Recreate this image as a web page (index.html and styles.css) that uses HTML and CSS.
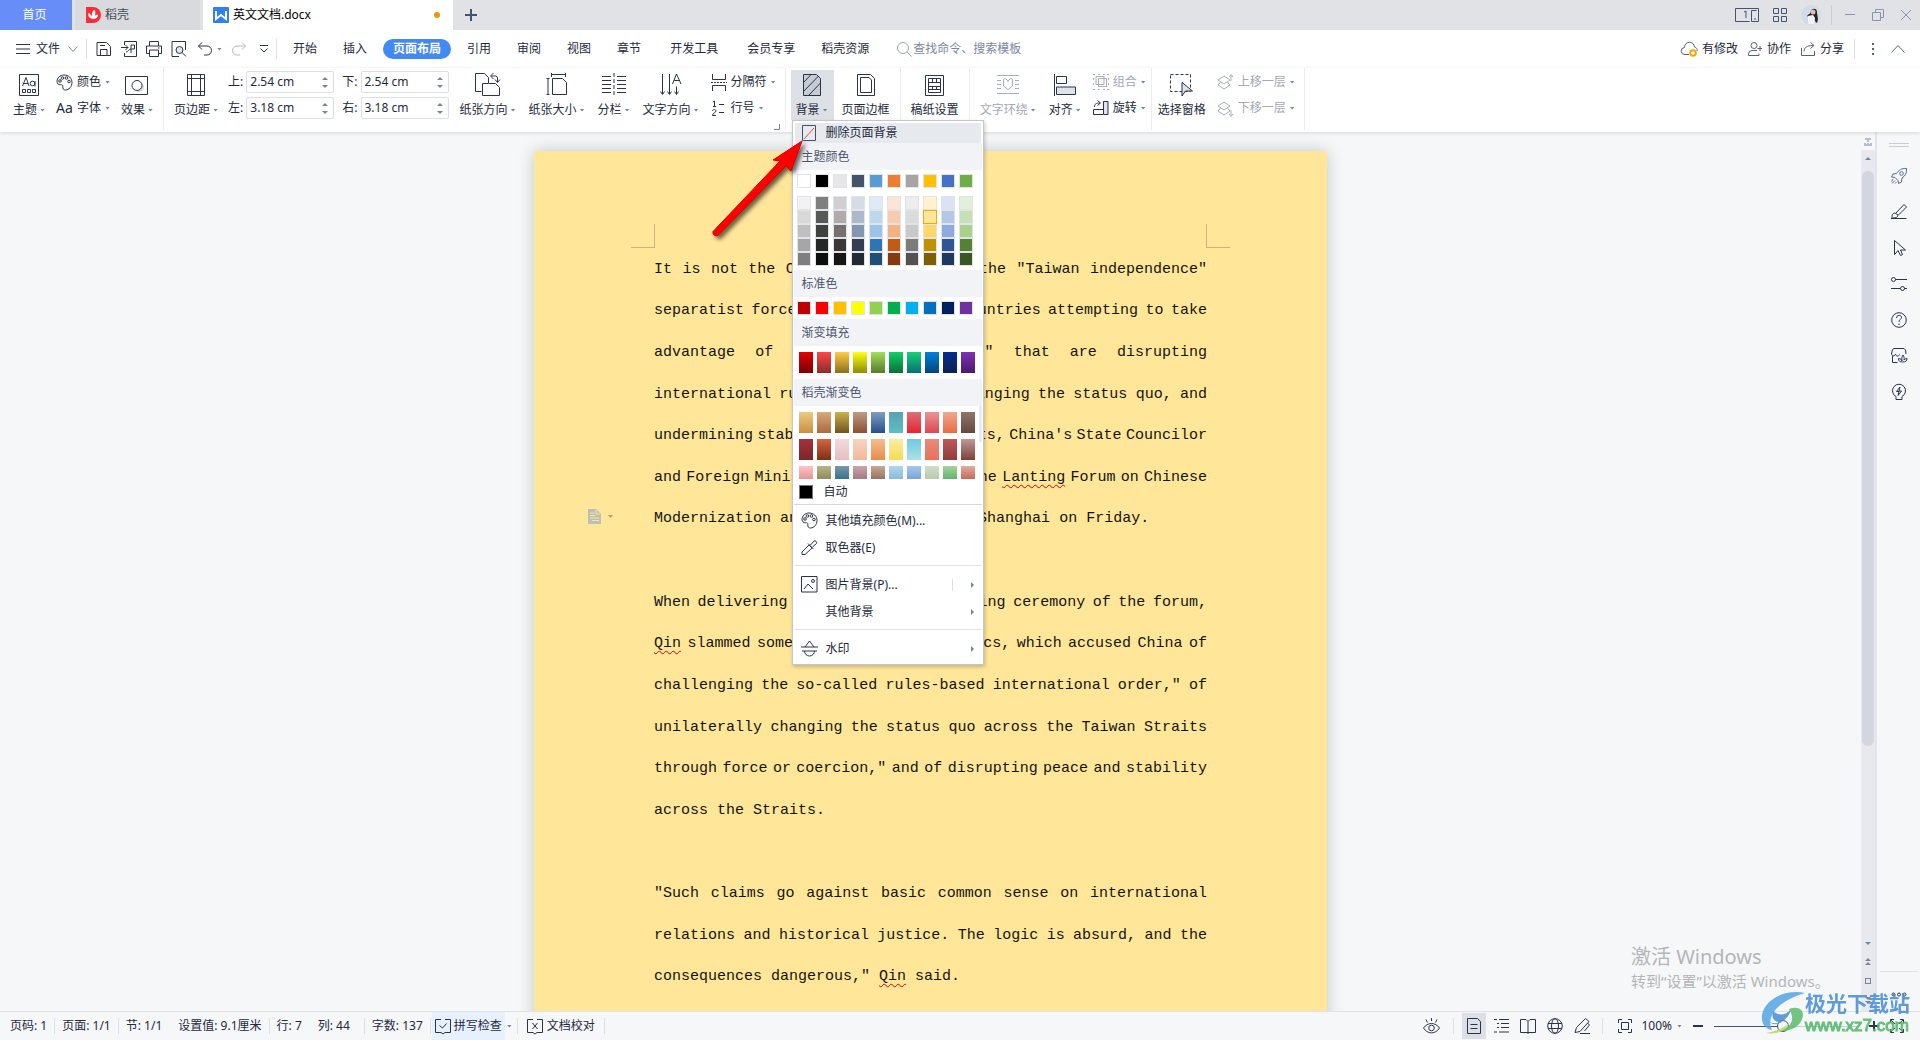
FILE: index.html
```html
<!DOCTYPE html>
<html lang="zh-CN">
<head>
<meta charset="utf-8">
<title>英文文档.docx</title>
<link rel="stylesheet" href="styles.css">
</head>
<body>
<svg class="defs" aria-hidden="true">
  <symbol id="palette" viewBox="0 0 17 17"><path d="M8 1C4 1 1 4 1 7.500c0 2 1.500 3.500 3.500 3.200 1.500-.2 2.500.3 2.300 2-.2 2 .7 3.300 2.700 3.300 3.500 0 6.500-3.500 6.500-7.500C16 4 12.500 1 8 1z"/><circle cx="4" cy="7" r="1.300"/><circle cx="6.500" cy="4" r="1.300"/><circle cx="10.500" cy="4" r="1.300"/><circle cx="13" cy="7.500" r="1.300"/></symbol>
  <symbol id="layers" viewBox="0 0 17 17"><path d="M1 6l6-4 6 4-6 4zM3.500 8L1 11l6 4 6-4-2.500-3"/></symbol>
</svg>

<header class="titlebar">
  <button class="tab home">首页</button>
  <button class="tab docer"><svg width="15" height="16" viewBox="0 0 15 16"><path class="red" d="M0 0h7a8 8 0 0 1 0 16H0z"/><path class="wfill" d="M7 12C2 11 2 8 2.500 6c2 1 3 2 3.500 4C5.500 7 6 4 8.500 2.500 10 5 9.500 8 8 10c.7-1.500 2-2.500 4-2.500 0 3-2 4.500-5 4.500z"/></svg>稻壳</button>
  <button class="tab doc"><svg width="16" height="16" viewBox="0 0 16 16"><rect class="blue" width="16" height="16" rx="1"/><path class="wline" d="M3 4v8l5-4 5 4V4"/></svg><span>英文文档.docx</span><i class="dot"></i></button>
  <button class="plus" aria-label="新建"><svg width="12" height="12" viewBox="0 0 12 12"><path class="thick" d="M6 0v12M0 6h12"/></svg></button>
  <div class="wintools">
    <button aria-label="窗口"><svg width="24" height="14" viewBox="0 0 24 14"><path d="M14.500 13.500H.5V.5h23v13h-7V2.500h5M9 4l2-1v7M19 11h2"/></svg></button>
    <button aria-label="应用"><svg width="14" height="14" viewBox="0 0 14 14"><path d="M.5.500h5v5h-5zM8.500.500h5v5h-5zM.5 8.500h5v5h-5zM8.500 8.500h5v5h-5z"/></svg></button>
    <button class="avatar" aria-label="账号"><svg width="20" height="20" viewBox="0 0 20 20"><circle cx="10" cy="10" r="10" fill="#cfdde4" stroke="none"/><path fill="#2b2227" stroke="none" d="M6 11c1-2 3-1 4-5 1-3 6-3 6 1 0 3 2 7 0 11-2-1-3-4-3-6-2 1-4 1-7-1z"/><circle cx="12" cy="7" r="2.500" fill="#e9b9ab" stroke="none"/><path fill="#eef3f6" stroke="none" d="M7 11l5-1 2 3-1 6H7z"/></svg></button>
    <i class="vline"></i>
    <button class="pale" aria-label="最小化"><svg width="12" height="12" viewBox="0 0 12 12"><path d="M1 5.500h10"/></svg></button>
    <button class="pale" aria-label="还原"><svg width="12" height="12" viewBox="0 0 12 12"><path d="M.5 3.500h8v8h-8zM3.500 3.500v-3h8v8h-3"/></svg></button>
    <button class="pale" aria-label="关闭"><svg width="12" height="12" viewBox="0 0 12 12"><path d="M1 1l10 10M11 1L1 11"/></svg></button>
  </div>
</header>

<nav class="menubar">
  <button class="file"><svg width="14" height="10" viewBox="0 0 14 10"><path d="M0 .5h14M0 5h14M0 9.500h14"/></svg>文件<svg class="soft" width="10" height="6" viewBox="0 0 10 6"><path d="M.5.500L5 5.500 9.500.5"/></svg></button>
  <i class="vline"></i>
  <div class="quick">
    <button aria-label="保存"><svg width="16" height="16" viewBox="0 0 16 16"><path d="M1 1.500h9.500l4 4v9H1zM4.500 14.500V8.500H11v6M4 4.500h5"/></svg></button>
    <button aria-label="输出为PDF"><svg width="16" height="16" viewBox="0 0 16 16"><path d="M3.500 4V.5h12v15h-12V12M0 6.500h7M4.500 4L7 6.500 4.500 9M10 12V4h3.500v4H10c-2 0-3 3-5 3"/></svg></button>
    <button aria-label="打印"><svg width="16" height="16" viewBox="0 0 16 16"><path d="M3.500 5V.5h9V5M3.500 12.500h-3V5h15v7.500h-3M3.500 9h9v6.500h-9zM12 7h1.500"/></svg></button>
    <button aria-label="打印预览"><svg width="16" height="16" viewBox="0 0 16 16"><path d="M8 15.500H1V.5h13.500V9"/><circle class="tint" cx="8.500" cy="9" r="3.500"/><path d="M11 11.500l4 4"/></svg></button>
    <button class="undo" aria-label="撤销"><svg width="14" height="14" viewBox="0 0 14 14"><path d="M4 .5L.5 4 4 7.500M.5 4H9a4.500 4.500 0 0 1 0 9H6"/></svg><i class="caret"></i></button>
    <button class="faint" aria-label="恢复"><svg width="14" height="14" viewBox="0 0 14 14"><path d="M10 .5L13.500 4 10 7.500M13.500 4H5a4.500 4.500 0 0 0 0 9h3"/></svg></button>
    <button aria-label="更多"><svg width="8" height="8" viewBox="0 0 8 8"><path d="M0 .5h8M.5 3.500L4 7l3.500-3.500"/></svg></button>
  </div>
  <i class="vline"></i>
  <div class="tabs">
    <button>开始</button><button>插入</button><button class="active">页面布局</button><button>引用</button><button>审阅</button><button>视图</button><button>章节</button><button class="wide">开发工具</button><button>会员专享</button><button>稻壳资源</button>
  </div>
  <label class="search"><svg width="15" height="15" viewBox="0 0 15 15"><circle cx="6" cy="6" r="5.500"/><path d="M10 10l4.500 4.500"/></svg><input type="text" placeholder="查找命令、搜索模板"></label>
  <div class="share">
    <button><svg width="17" height="15" viewBox="0 0 17 15"><path d="M8 12.500H4a3.500 3.500 0 0 1-.5-7 5 5 0 0 1 10-.5c2 .5 3 2 2.500 4"/><circle class="amber" cx="12" cy="11" r="2.800"/></svg>有修改</button>
    <button><svg width="15" height="14" viewBox="0 0 15 14"><circle cx="6" cy="3.500" r="3"/><path d="M9 8.500H4a3.500 3.500 0 0 0-3.500 3.500v1.500h10.500v-2M9.500 6.500H14M12 4v5"/></svg>协作</button>
    <button><svg width="15" height="14" viewBox="0 0 15 14"><path d="M.5 6v7.500h13V9M3 9.500c0-4 3-6 9-6M9.500.5l3.500 3-3.500 3"/></svg>分享</button>
    <i class="vline"></i>
    <button class="soft" aria-label="更多"><svg width="4" height="12" viewBox="0 0 4 12"><path class="thick" d="M1 1h2M1 6h2M1 11h2"/></svg></button>
    <button class="soft" aria-label="收起"><svg width="14" height="8" viewBox="0 0 14 8"><path d="M.5 7.500l6.500-7 6.500 7"/></svg></button>
  </div>
</nav>

<section class="ribbon">
  <div class="group close">
    <button class="tool"><svg width="20" height="22" viewBox="0 0 20 22"><path d="M.5.500h19v21H.5zM3.500 15.500h3v3h-3zM8.500 15.500h3v3h-3zM13.500 15.500h3v3h-3z"/><path d="M3.500 12L7 3.500l3 8.500M4.500 9.500h4.500"/><circle cx="13.500" cy="9.500" r="2.300"/><path d="M16 7v5.500"/></svg><span>主题<i class="caret"></i></span></button>
    <div class="stack">
      <button class="mini"><svg width="17" height="17"><use href="#palette"/></svg>颜色<i class="caret"></i></button>
      <button class="mini"><span class="aa">Aa</span>字体<i class="caret"></i></button>
    </div>
    <button class="tool"><svg width="24" height="22" viewBox="0 0 24 22"><circle class="ghost" cx="14" cy="13" r="5"/><path d="M.5 2.500h22v18H.5z"/><circle class="paper" cx="12" cy="11.500" r="5"/></svg><span>效果<i class="caret"></i></span></button>
  </div>
  <i class="rule"></i>
  <div class="group">
    <button class="tool"><svg width="18" height="22" viewBox="0 0 18 22"><path d="M.5.500h17v21H.5zM4.500 0v22M13.500 0v22M0 4.500h18M0 17.500h18"/></svg><span>页边距<i class="caret"></i></span></button>
    <div class="margins">
      <label>上:<span class="spin"><input type="text" value="2.54 cm"><i class="up"></i><i class="down"></i></span></label>
      <label>下:<span class="spin"><input type="text" value="2.54 cm"><i class="up"></i><i class="down"></i></span></label>
      <label>左:<span class="spin"><input type="text" value="3.18 cm"><i class="up"></i><i class="down"></i></span></label>
      <label>右:<span class="spin"><input type="text" value="3.18 cm"><i class="up"></i><i class="down"></i></span></label>
    </div>
    <button class="tool"><svg width="25" height="24" viewBox="0 0 25 24"><path d="M6.500 18.500h-6V.5h9l4 4v5.500M13.500 10.500h7l4 4v8H7.500v-12h6M16.500 3h4a2 2 0 0 1 2 2v4M18.500 0l-3 3 3 3M20 6.500l2.500 3 2.500-3"/></svg><span>纸张方向<i class="caret"></i></span></button>
    <button class="tool"><svg width="22" height="24" viewBox="0 0 22 24"><path d="M5.500 1.500h14M5.500 0v4M19.500 0v4M2 5.500v16M.5 5.500h3M.5 21.500h3M6.500 5.500h10l4 4v12h-14z"/></svg><span>纸张大小<i class="caret"></i></span></button>
    <button class="tool"><svg width="24" height="24" viewBox="0 0 24 24"><path d="M0 3.500h9M0 7.500h9M0 11.500h9M0 15.500h9M0 19.500h9M15 3.500h9M15 7.500h9M15 11.500h9M15 15.500h9M15 19.500h9"/><path class="dash" d="M12 0v24"/></svg><span>分栏<i class="caret"></i></span></button>
    <button class="tool"><svg width="22" height="24" viewBox="0 0 22 24"><path d="M2.500 1v20M.5 18.500l2 3 2-3M9.500 1v20M7.500 18.500l2 3 2-3M12.500 11l4-10 4.500 10M14 7.500h5.500M16.500 13.500v8M14.500 18.500l2 3 2-3"/></svg><span>文字方向<i class="caret"></i></span></button>
    <div class="stack">
      <button class="mini"><svg width="16" height="17" viewBox="0 0 16 17"><path d="M1.500 0v5.500h13V0M1.500 17v-5.500h13V17"/><path class="dots" d="M0 8.500h16"/></svg>分隔符<i class="caret"></i></button>
      <button class="mini"><svg width="16" height="17" viewBox="0 0 16 17"><path d="M2 2l1.500-1v5.500M2 6.500h3M1.500 11c0-2 3.500-2 3.500 0 0 1.500-3.500 2-3.500 4.500H5M8 4.500h5M8 12.500h5"/></svg>行号<i class="caret"></i></button>
    </div>
    <svg class="launcher" width="6" height="6" viewBox="0 0 6 6"><path d="M5.500 0v5.500H0"/></svg>
  </div>
  <i class="rule"></i>
  <div class="group">
    <div class="dropdown">
      <button class="tool pressed"><svg width="18" height="22" viewBox="0 0 18 22"><path class="hatch" d="M.5.500h13l4 4v17H.5z"/><path d="M1 8l7-7.500M1 17L15.500 2M5.500 21.500l12-12.500"/></svg><span>背景<i class="caret"></i></span></button>
      <div class="menu">
        <button class="remove"><svg width="14" height="16" viewBox="0 0 14 16"><path class="thick2" d="M.5.500h13v15H.5z"/><path class="redline" d="M2 14L12 3"/></svg>删除页面背景</button>
        <h3>主题颜色</h3>
        <div class="swatches theme" data-set="theme"></div>
        <div class="swatches shades" data-set="shades"></div>
        <h3>标准色</h3>
        <div class="swatches std" data-set="standard"></div>
        <h3>渐变填充</h3>
        <div class="gradients" data-set="gradient"></div>
        <h3 class="docer-head">稻壳渐变色</h3>
        <div class="gradients docer-set" data-set="docer"></div>
        <button class="auto"><i class="black"></i>自动</button>
        <button class="item first"><svg width="17" height="17"><use href="#palette"/></svg>其他填充颜色(M)...</button>
        <button class="item"><svg width="17" height="17" viewBox="0 0 17 17"><path d="M8 6l3 3-7 6.500H1V13zM7 4.500l5.500 5.500M9.500 6L13 2c1-1 3.500 1 2.500 2.500L11.500 8"/></svg>取色器(E)</button>
        <hr>
        <button class="item"><svg width="17" height="17" viewBox="0 0 17 17"><path d="M.5.500h15.500v15.500H.5zM3 13l4-5 5 5"/><circle cx="12" cy="5" r="1.500"/></svg>图片背景(P)...<i class="split"></i><i class="more"></i></button>
        <button class="item"><svg width="17" height="17"></svg>其他背景<i class="more"></i></button>
        <hr>
        <button class="item"><svg width="17" height="17" viewBox="0 0 17 17"><path d="M8.500 1L4 7M8.500 1L13 7M0 7h17M1 11h15M3.500 11a5 5 0 0 0 10 0"/></svg>水印<i class="more"></i></button>
      </div>
      <svg class="pointer" width="100" height="110" viewBox="0 0 100 110"><path d="M4 97.500L71 27l-7-1L93 7 82 37l-5-5L9 101.500a3.500 3.500 0 0 1-5-4z"/></svg>
    </div>
    <button class="tool"><svg width="18" height="22" viewBox="0 0 18 22"><path d="M.5.500h13l4 4v17H.5zM3.500 3.500h8.500l2.500 2.500v12.500h-11z"/></svg><span>页面边框</span></button>
  </div>
  <i class="rule"></i>
  <div class="group">
    <button class="tool"><svg width="19" height="22" viewBox="0 0 19 22"><path d="M.5 1.500h18v20H.5zM3.500 4.500h12v14h-12zM3.500 8.500h12M3.500 12.500h12M3.500 15.500h12M7.500 4.500v4M11.500 4.500v4M7.500 12.500v3M11.500 12.500v3"/></svg><span>稿纸设置</span></button>
  </div>
  <i class="rule"></i>
  <div class="group">
    <button class="tool off"><svg width="22" height="20" viewBox="0 0 22 20"><path d="M0 .5h22M0 5.500h4M18 5.500h4M0 9.500h4M18 9.500h4M0 13.500h4M18 13.500h4M0 18.500h22M6.500 5c0-2 3-2 4.500 1.500 1.500-3.500 4.500-3.500 4.500-1.500v6L11 14.500 6.500 11z"/></svg><span>文字环绕<i class="caret"></i></span></button>
    <button class="tool"><svg width="22" height="22" viewBox="0 0 22 22"><path d="M.5 0v22M2.500 2.500h10v7h-10z"/><path class="tint" d="M2.500 13h19v7.500h-19z"/></svg><span>对齐<i class="caret"></i></span></button>
    <div class="stack">
      <button class="mini off"><svg width="16" height="16" viewBox="0 0 16 16"><path d="M5.500 4.500h8v8h-8zM3 2.500h8v8H3zM0 .5h2M14 .5h2M0 15.500h2M14 15.500h2M.5 4v2M.5 9v2M15.500 4v2M15.500 9v2M5 15.500h2M10 15.500h2M5 .5h2M10 .5h2"/></svg>组合<i class="caret"></i></button>
      <button class="mini"><svg width="16" height="16" viewBox="0 0 16 16"><path class="tint" d="M10.500 1.500h4.500v13h-4.500z"/><path d="M10 9.500H.5v5H10M1.500 7c0-3 1.500-4 5.500-4M4.500.5L7.500 3 4.500 5.500"/></svg>旋转<i class="caret"></i></button>
    </div>
  </div>
  <i class="rule tight"></i>
  <div class="group close">
    <button class="tool"><svg width="24" height="23" viewBox="0 0 24 23"><path class="dash2" d="M.5.500h20v17H.5z"/><path class="tint" d="M12 8.500v13.500l3.500-5h7z"/></svg><span>选择窗格</span></button>
    <div class="stack">
      <button class="mini off"><svg width="17" height="17" viewBox="0 0 17 17"><use href="#layers"/><path d="M14 7V1M12 3l2-2.500L16 3"/></svg>上移一层<i class="caret"></i></button>
      <button class="mini off"><svg width="17" height="17" viewBox="0 0 17 17"><use href="#layers"/><path d="M14 10v6M12 14l2 2.500 2-2.500"/></svg>下移一层<i class="caret"></i></button>
    </div>
  </div>
  <i class="rule"></i>
</section>

<main class="workspace">
  <div class="canvas">
    <article class="page">
      <i class="corner left"></i><i class="corner right"></i>
      <span class="badge"><svg width="13" height="15" viewBox="0 0 13 15"><path class="gfill" d="M0 0h8l5 5v10H0z"/><path class="wline2" d="M2 4h4M2 6.500h5M2 9h9M4 11.500h7M8 1v4h4"/></svg><i class="caret"></i></span>
      <div class="text">
        <p>
          <span class="line">It is not the Chinese mainland but the "Taiwan independence"</span>
          <span class="line">separatist forces and a handful of countries attempting to take</span>
          <span class="line">advantage of "Taiwan independence" that are disrupting</span>
          <span class="line">international rules, unilaterally changing the status quo, and</span>
          <span class="line">undermining stability across the Straits, China's State Councilor</span>
          <span class="line">and Foreign Minister Qin Gang said at the Lanting Forum on Chinese</span>
          <span class="line end">Modernization and the World held in Shanghai on Friday.</span>
        </p>
        <p class="blank"></p>
        <p>
          <span class="line">When delivering a keynote at the opening ceremony of the forum,</span>
          <span class="line">Qin slammed some recent absurd rhetorics, which accused China of</span>
          <span class="line">challenging the so-called rules-based international order," of</span>
          <span class="line">unilaterally changing the status quo across the Taiwan Straits</span>
          <span class="line">through force or coercion," and of disrupting peace and stability</span>
          <span class="line end">across the Straits.</span>
        </p>
        <p class="blank"></p>
        <p>
          <span class="line">"Such claims go against basic common sense on international</span>
          <span class="line">relations and historical justice. The logic is absurd, and the</span>
          <span class="line end">consequences dangerous," Qin said.</span>
        </p>
      </div>
    </article>
    <div class="activate"><strong>激活 Windows</strong><span>转到“设置”以激活 Windows。</span></div>
  </div>
  <div class="scroll">
    <svg class="ruler" width="8" height="8" viewBox="0 0 8 8"><path d="M1 0h6v2H5v2H3V2H1zM0 5h2v1h1V5h2v1h1V5h2v3H0z"/></svg>
    <div class="track">
      <i class="up"></i><div class="thumb"></div>
      <div class="jump"><i class="down"></i><span class="pair"><i class="up"></i><i class="up"></i></span><i class="box"></i><span class="pair"><i class="down"></i><i class="down"></i></span></div>
    </div>
  </div>
  <aside class="side">
    <i class="grip"></i>
    <button aria-label="快捷"><svg class="steel" width="16" height="16" viewBox="0 0 16 16"><path d="M15.500.5c-5-.5-8 2-10 5L2 6 .5 9l3.500.5 3 3 .5 3 3-1.500.5-4c3-2 5-5 4.500-9.500zM2 11l-1.500 2.500M4 12.500l-3 3M5.500 14L4 15.500"/><circle cx="10.500" cy="5.500" r="1.800"/></svg></button>
    <button aria-label="样式"><svg width="16" height="16" viewBox="0 0 16 16"><path d="M0 14.500h15.500M1 14c0-3 .5-5 3-5l3 2c0 2-2 3-5 3M5 9l8-8.500L15.500 3l-8 8"/></svg></button>
    <button aria-label="选择"><svg width="16" height="16" viewBox="0 0 16 16"><path d="M3.500.5v14l3.500-4 2.500 5 2-1-2-4.500h5z"/></svg></button>
    <button aria-label="设置"><svg width="16" height="16" viewBox="0 0 16 16"><circle cx="2.500" cy="3.500" r="2"/><path d="M4.500 3.500H16M0 12.500h9.500M13.500 12.500H16"/><circle cx="11.500" cy="12.500" r="2"/></svg></button>
    <button aria-label="帮助"><svg width="16" height="16" viewBox="0 0 16 16"><circle cx="8" cy="8" r="7.300"/><path d="M5.500 6c0-3.500 5-3.500 5-.5 0 2-2.500 2-2.500 4.500M8 11.500V13"/></svg></button>
    <button aria-label="素材"><svg width="16" height="16" viewBox="0 0 16 16"><path d="M6.500 14.500H1.500V8M.5 6l1-4.500L3 .5h10l1.500 1.500.5 4M.5 5.500c0 3 3.500 3 4 .5.500 2.500 3 3 4 .5M11.500 14c-3 0-4-1-4-3.500 2 0 3 1 3.500 2.500-.5-3 0-4.500 1-6 1 1.500 1.500 3 1 5 1-1 1.500-1.500 3-1.500 0 2.500-1.500 3.500-4.500 3.500z"/></svg></button>
    <button aria-label="灵感"><svg width="16" height="16" viewBox="0 0 16 16"><path d="M5 12.500a6.500 6.500 0 1 1 6 0v3H5zM9 3L5.500 7.500H8L7 11.500 10.500 7H8z"/></svg></button>
    <hr>
    <button class="dots3" aria-label="更多"><svg width="16" height="5" viewBox="0 0 16 5"><circle cx="2.500" cy="2.500" r="1.500"/><circle cx="8" cy="2.500" r="1.500"/><circle cx="13.500" cy="2.500" r="1.500"/></svg></button>
  </aside>
</main>

<footer class="status">
  <span>页码: 1</span><i class="vline"></i>
  <span>页面: 1/1</span><i class="vline"></i>
  <span class="pad">节: 1/1</span><span>设置值: 9.1厘米</span><i class="vline"></i>
  <span class="pad">行: 7</span><span class="pad">列: 44</span><i class="vline"></i>
  <span>字数: 137</span><i class="vline"></i>
  <button class="spell"><svg width="16" height="16" viewBox="0 0 16 16"><path d="M6 1.500H.5v13H6l2 1.500 2-1.500h5.500v-13H10M4.500 7.500L7.500 10l4-4.500"/></svg>拼写检查</button><i class="caret"></i><i class="vline"></i>
  <button class="proof"><svg width="16" height="16" viewBox="0 0 16 16"><path d="M6 1.500H.5v13H6l2 1.500 2-1.500h5.500v-13H10M5.500 5l5 6M10.500 5l-5 6"/></svg>文档校对</button><i class="vline"></i>
  <div class="views">
    <button class="eye" aria-label="护眼"><svg width="17" height="16" viewBox="0 0 17 16"><path d="M.5 10c4-6 12-6 16 0-4 6.500-12 6.500-16 0zM8.500 0v3M3 1.500l1.500 3M14 1.500l-1.500 3"/><circle cx="8.500" cy="10" r="2.800"/></svg></button>
    <i class="vline"></i>
    <button class="on" aria-label="页面视图"><svg width="14" height="16" viewBox="0 0 14 16"><path d="M.5.500h10l3 3v12H.5zM3.500 6.500h7M3.500 10.500h7"/></svg></button>
    <button aria-label="大纲"><svg width="15" height="14" viewBox="0 0 15 14"><path d="M0 .5h3M5 .5h10M3 4.500h2M7 4.500h8M3 8.500h2M7 8.500h8M0 13h3M5 13h10"/></svg></button>
    <button aria-label="阅读"><svg width="16" height="16" viewBox="0 0 16 16"><path d="M8 14.500H.5v-13h5.500l2 2 2-2h5.500v13zM8 3.500V16"/></svg></button>
    <button aria-label="网页"><svg width="16" height="16" viewBox="0 0 16 16"><circle cx="8" cy="8" r="7.300"/><ellipse cx="8" cy="8" rx="3.500" ry="7.300"/><path d="M1 5.500h14M1 10.500h14"/></svg></button>
    <button aria-label="写作"><svg width="17" height="16" viewBox="0 0 17 16"><path d="M6 15.500h10M1 14.500l1.500-5L11.500.5l3.500 3-9 10zM13.500 5l2 2-5 6"/></svg></button>
    <i class="vline"></i>
    <button class="fit" aria-label="适合页面"><svg width="14" height="14" viewBox="0 0 14 14"><path d="M.5 4V.5H4M10 .5h3.500V4M13.500 10v3.500H10M4 13.500H.5V10M3.500 3.500h7v7h-7z"/></svg></button>
    <button class="pct">100%<i class="caret"></i></button>
    <button aria-label="缩小"><svg width="10" height="12" viewBox="0 0 10 12"><path class="thick" d="M0 6h10"/></svg></button>
    <input class="zoom" type="range" min="0" max="100" value="48" aria-label="缩放">
    <button aria-label="放大"><svg width="10" height="12" viewBox="0 0 10 12"><path class="thick" d="M0 6h10M5 1v10"/></svg></button>
    <button aria-label="全屏"><svg width="14" height="14" viewBox="0 0 14 14"><path d="M.5 4V.5H4M10 .5h3.500V4M13.500 10v3.500H10M4 13.500H.5V10M1 1l4 4M13 1L9 5M13 13L9 9M1 13l4-4"/></svg></button>
  </div>
</footer>

<div class="brand">
  <svg width="44" height="44" viewBox="0 0 44 44"><path fill="#59a7e6" d="M44 2C24-2 4 8 1 24c-1 8 3 14 10 15C5 27 14 11 44 2z"/><path fill="#4f8fd8" d="M7 30c6 5 20 2 23-12-6 8-14 6-18 2-2 8 2 12 9 11-5 3-10 3-14-1z"/><path fill="#5fbf70" d="M28 18c8-3 14 0 14 6-1 12-14 18-28 16 14-2 22-9 14-22z"/><path fill="#b9d66b" d="M5 42c10-2 18-5 24-10-4 8-14 12-24 10z"/></svg>
  <div><strong>极光下载站</strong><span>www.xz7.com</span></div>
</div>
<script src="app.js"></script>
</body>
</html>
```
FILE: styles.css
```css
* { box-sizing: border-box; }
body {
  margin: 0;
  height: 100vh;
  display: flex;
  flex-direction: column;
  overflow: hidden;
  position: relative;
  background: #f6f7f9;
  color: #232a3d;
  font: 12px/16px "Noto Sans", "Noto Sans CJK SC", sans-serif;
}
button, input { font: inherit; color: inherit; border: 0; padding: 0; margin: 0; background: none; }
button { display: flex; align-items: center; white-space: nowrap; }
i { display: block; flex: none; }
svg { display: block; flex: none; fill: none; stroke: #2a3348; stroke-width: 1; overflow: visible; }
.defs { position: absolute; width: 0; height: 0; }
.thick { stroke-width: 2; }
.tint { fill: #dfe3ea; }
.dash { stroke-dasharray: 4 2; }
.dash2 { stroke-dasharray: 3 2; }
.dots { stroke-dasharray: 2 1; }
.vline { width: 1px; height: 20px; background: #dcdfe6; }
.caret { width: 5px; height: 3px; background: #78839c; clip-path: polygon(0 0, 100% 0, 50% 100%); }
.up, .down { width: 6px; height: 3px; border: 3px solid transparent; }
.up { border-top: 0; border-bottom-color: #78839c; }
.down { border-bottom: 0; border-top-color: #78839c; }

/* title bar */
.titlebar { flex: none; height: 30px; display: flex; gap: 3px; background: #e1e2e6; }
.titlebar svg { stroke: #46536f; }
.tab { height: 30px; gap: 4px; padding: 0 11px; }
.tab.home { width: 72px; justify-content: center; background: #668df8; color: #fff; padding-right: 14px; }
.tab.docer { width: 125px; background: #d8dadd; color: #454d5e; }
.tab.doc { width: 250px; padding: 0 10px; background: #fff; color: #000; }
.tab .red { fill: #fb2b38; stroke: none; }
.tab .wfill { fill: #fff; stroke: none; }
.tab .blue { fill: #2f80f3; stroke: none; }
.tab .wline { stroke: #fff; stroke-width: 2; }
.dot { width: 6px; height: 6px; border-radius: 3px; background: #e69a0a; margin-left: auto; margin-right: 3px; }
.plus { padding: 0 9px; }
.wintools { margin-left: auto; display: flex; align-items: center; gap: 14px; padding-right: 8px; }
.wintools .pale { margin-right: 2px; }
.wintools .pale:last-child { margin-right: 0; }
.wintools .pale svg { stroke: #8a95ad; }
.wintools .vline { background: #cbcdd3; margin: 0 -2px 0 -4px; }

/* menu bar */
.menubar { flex: none; height: 38px; display: flex; align-items: center; background: #fff; }
.file { padding: 0 8px 0 16px; gap: 6px; }
.file .soft { margin-left: 2px; }
.soft svg, svg.soft { stroke: #8089a0; }
.quick { display: flex; align-items: center; gap: 9px; padding: 0 8px 0 9px; }
.undo { gap: 5px; margin-left: 2px; }
.quick .faint { margin-left: 1px; }
.quick .faint svg { stroke: #b3b8c4; }
.quick button:last-child { padding-left: 5px; }
.tabs { display: flex; align-items: center; padding-left: 3px; }
.tabs button { height: 20px; padding: 0 13px; }
.tabs .active { padding: 0 10px; margin: 0 3px; border-radius: 10px; background: #4389f3; color: #fff; font-weight: bold; }
.tabs .wide { padding: 0 16px; }
.search { display: flex; align-items: center; gap: 1px; padding-left: 15px; }
.search svg { stroke: #9aa4bb; }
.search input { width: 130px; outline: 0; }
.search input::placeholder { color: #7a86a0; opacity: 1; }
.share { margin-left: auto; display: flex; align-items: center; gap: 10px; padding-right: 15px; }
.share button { gap: 4px; }
.share svg { stroke: #56617b; }
.share .soft { padding-left: 6px; }
.share .amber { stroke: #f9a602; stroke-width: 2; }

/* ribbon */
.ribbon {
  flex: none; height: 64px; display: flex; align-items: flex-start; padding-left: 8px;
  background: #fff; position: relative; z-index: 2; box-shadow: 0 1px 4px #00000022;
}
.group { display: flex; gap: 3px; position: relative; }
.group.close { gap: 2px; }
.rule { width: 1px; height: 62px; background: #ebedf1; margin: 0 5px; }
.rule.tight { margin: 0 1px; }
.tool { flex-direction: column; height: 50px; padding: 0 5px; justify-content: space-between; margin-top: 2px; }
.tool > svg { margin: auto 0; }
.tool > span { display: flex; align-items: center; gap: 3px; height: 20px; }
.stack { display: flex; flex-direction: column; gap: 10px; padding-top: 6px; }
.mini { gap: 4px; height: 16px; padding: 0 4px; }
.aa { font-size: 14px; width: 17px; }
.off { color: #a3a8b3; }
.off svg { stroke: #a9adb6; }
.ghost { fill: #d8dbe0; stroke: none; }
.paper { fill: #fff; }
.margins { display: grid; grid-template-columns: auto auto; gap: 2px 8px; padding: 2px 3px 0 2px; }
.margins label { display: flex; align-items: center; gap: 3px; }
.spin { display: grid; grid-template-columns: 1fr 6px; align-items: center; width: 88px; height: 22px; padding: 2px 5px 2px 3px; border: 1px solid #dcdfe5; border-radius: 2px; }
.spin input { width: 72px; grid-row: 1 / 3; outline: 0; }
.launcher { position: absolute; right: 0; bottom: -10px; stroke: #78839c; }
.pressed { background: #dde1e6; padding-right: 6px; }
.hatch { fill: #c7cbd3; }
.dropdown { position: relative; }

/* background menu */
.menu {
  position: absolute; left: 1px; top: 52px; width: 192px; padding: 2px 1px; color: #3a4358;
  background: #fff; border: 1px solid #c3c6cc; box-shadow: 1px 2px 4px #00000038;
}
.menu button { width: 100%; color: #232a3d; }
.menu .remove { height: 20px; margin: 0 1px; padding: 0 7px; gap: 9px; width: 186px; background: #e6e9ee; border-radius: 2px; }
.menu .remove svg { margin-right: 1px; }
.thick2 { stroke: #46506a; }
.redline { stroke: #e2504a; }
.menu h3 { margin: 0; height: 27px; padding-left: 8px; font: inherit; line-height: 27px; background: #f2f3f6; color: #4a556e; }
.swatches { display: grid; grid-template-columns: repeat(10, 14px); column-gap: 4px; padding: 4px 3px; }
.swatch { width: 14px; height: 14px; border: 1px solid #e1e3e8; }
.menu .swatch { width: 14px; }
.menu .swatch.chosen { border-color: #ffa800; }
.gradients { display: grid; grid-template-columns: repeat(10, 14px); gap: 6px 4px; padding: 6px 5px; }
.menu .gradient { width: 14px; height: 21px; }
.docer-set { height: 73px; overflow: hidden; padding-bottom: 0; border-right: 3px solid #e9ebee; border-image: linear-gradient(#e9ebee 0 36px, #fff 36px) 1; }
.menu .auto { height: 26px; padding: 0 5px; gap: 11px; border-bottom: 1px solid #d3d6dc; }
.black { width: 14px; height: 14px; background: #000; border: 1px solid #777; }
.menu .item { height: 27px; padding: 0 8px 0 7px; gap: 8px; }
.menu .first { margin-top: 2px; }
.menu hr { border: 0; height: 1px; background: #e1e3e9; margin: 4px 0 5px; }
.more { margin-left: auto; border: 3px solid transparent; border-left: 3px solid #78839c; border-right: 0; }
.split { width: 1px; height: 12px; background: #dcdfe6; margin-left: auto; }
.split + .more { margin-left: 10px; }
.pointer { position: absolute; left: -82px; top: 66px; pointer-events: none; filter: drop-shadow(3px 3px 2px #0009); }
.pointer path { fill: #f00; stroke: #d80000; }

/* workspace */
.workspace { flex: 1; min-height: 0; display: flex; }
.canvas { flex: 1; min-width: 0; position: relative; overflow: hidden; padding-top: 19px; }
.page { position: relative; width: 793px; min-height: 1122px; margin: 0 auto; padding: 98px 120px; background: #ffe699; box-shadow: 0 0 16px #00000033; }
.corner { position: absolute; top: 73px; width: 24px; height: 24px; border-bottom: 1px solid #c9b57a; }
.corner.left { left: 97px; border-right: 1px solid #c9b57a; }
.corner.right { right: 97px; border-left: 1px solid #c9b57a; }
.badge { position: absolute; left: 54px; top: 358px; display: flex; align-items: center; gap: 7px; }
.badge .caret { background: #a99f82; }
.gfill { fill: #bcc0b4; stroke: none; }
.wline2 { stroke: #ffe699; }
.text { display: grid; grid-auto-rows: 1fr; height: 749px; color: #14140f; font: 15px/20px "Liberation Mono", monospace; }
.text p { display: contents; }
.text .blank { display: block; margin: 0; }
.line { display: flex; align-items: center; justify-content: space-between; white-space: nowrap; }
.line.end { justify-content: flex-start; gap: 9px; }
.typo { text-decoration: underline wavy #e00000 1px; text-underline-offset: 3px; }
.activate { position: absolute; left: calc(100% - 230px); bottom: 19px; color: #b4b5b8; display: flex; flex-direction: column; white-space: nowrap; }
.activate strong { font-weight: normal; font-size: 20px; line-height: 26px; }
.activate span { font-size: 15px; line-height: 22px; }

.scroll { flex: none; width: 14px; display: flex; flex-direction: column; align-items: center; }
.ruler { margin: 6px 0 4px; fill: #b6bdcf; stroke: none; }
.track { flex: 1; width: 100%; display: flex; flex-direction: column; align-items: center; background: #e8e9ef; padding: 7px 1px 0; }
.thumb { width: 12px; flex: 1; margin-top: 11px; border-radius: 6px; background: #d3d6df; }
.jump { height: 265px; display: flex; flex-direction: column; align-items: center; justify-content: flex-end; gap: 13px; padding-bottom: 7px; }
.box { width: 6px; height: 6px; border: 1px solid #78839c; }
.pair { display: flex; flex-direction: column; gap: 1px; }
.side { flex: none; width: 45px; display: flex; flex-direction: column; align-items: center; gap: 20px; border-left: 2px solid #e3e5ec; padding-top: 11px; }
.grip { width: 20px; height: 4px; border: solid #c9ccd3; border-width: 1px 0; margin-bottom: 1px; }
.side .steel { stroke: #5a6888; }
.side hr { width: 38px; height: 1px; border: 0; background: #dfe2e9; margin: auto 0 0; }
.side .dots3 { margin-bottom: 14px; }

/* status bar */
.status { flex: none; height: 29px; display: flex; align-items: center; padding-left: 10px; gap: 5px; border-top: 1px solid #e0e2e7; background: #f6f7f9; }
.status > span { padding: 0 2px; }
.status > span:first-child { padding-left: 0; }
.status .vline { height: 16px; }
.status > .pad { padding-right: 9px; }
.spell { background: #e7f0fd; height: 28px; padding: 0 3px; gap: 3px; margin: 0 -3px 0 -4px; }
.proof { gap: 4px; padding: 0 4px; }
.views { margin-left: auto; display: flex; align-items: center; gap: 11px; padding-right: 16px; }
.eye { margin-right: 2px; }
.on { background: #dce0e6; height: 26px; padding: 0 5px; margin: 0 -3px; }
.fit { margin: 0 -2px 0 4px; }
.pct { gap: 5px; }
.zoom { appearance: none; width: 144px; height: 14px; background: linear-gradient(90deg, #46536f 50%, #c9cdd6 50%) center / 100% 1px no-repeat; }
.zoom::-webkit-slider-thumb { appearance: none; width: 12px; height: 12px; border-radius: 6px; border: 1px solid #46536f; background: #f6f7f9; }

.brand { position: absolute; right: 10px; bottom: 4px; z-index: 3; display: flex; align-items: center; opacity: .88; }
.brand svg { stroke: none; }
.brand div { display: flex; flex-direction: column; }
.brand strong { font-size: 21px; line-height: 26px; color: #4a8fd6; }
.brand span { font: 17px/20px "Liberation Sans", sans-serif; color: #52b868; -webkit-text-stroke: 1px #52b868; }
```
FILE: app.js
```js
const sets = {
  theme: ["#ffffff #000000 #e7e6e6 #44546a #5b9bd5 #ed7d31 #a5a5a5 #ffc000 #4472c4 #70ad47"],
  shades: [
    "#f2f2f2 #7f7f7f #d0cece #d6dce5 #deebf7 #fbe5d6 #ededed #fff2cc #dae3f3 #e2f0d9",
    "#d9d9d9 #595959 #afabab #adb9ca #bdd7ee #f8cbad #dbdbdb #ffe699 #b4c7e7 #c5e0b4",
    "#bfbfbf #404040 #767171 #8497b0 #9dc3e6 #f4b183 #c9c9c9 #ffd966 #8faadc #a9d18e",
    "#a6a6a6 #262626 #3b3838 #333f50 #2e75b6 #c55a11 #7c7c7c #bf9000 #2f5597 #548235",
    "#7f7f7f #0d0d0d #181717 #222a35 #1f4e79 #843c0c #525252 #7f6000 #203864 #385723"
  ],
  standard: ["#c00000 #ff0000 #ffc000 #ffff00 #92d050 #00b050 #00b0f0 #0070c0 #002060 #7030a0"],
  gradient: ["#e60000,#7a0000 #ff4545,#8c2c2c #ffcc40,#8c7020 #ffff10,#8c8c08 #a0e055,#587a30 #10d065,#0a7038 #18d070,#087078 #0080e0,#004678 #002f90,#102050 #8030b8,#481a68"],
  docer: [
    "#ebcb80,#c98f42 #d8a87c,#ab6a40 #ccb34c,#6e5520 #bf9c85,#8a5030 #7f9dc6,#265089 #55a2b4,#60bdc4 #db7078,#e62430 #eb9498,#dd4650 #f0a890,#ea6a40 #937468,#64483f",
    "#a83038,#7a262a #d4653c,#7f3018 #f2dada,#e5bfc0 #f7d5c0,#f4b89a #f4bd90,#e88c44 #f8eda0,#f2dd55 #72c8e4,#a8e2e4 #ea8a78,#e9705c #bd5a58,#8f3c3c #be9a94,#7e4034",
    "#fcc5c4,#dc7475 #b8b488,#74703c #7898a8,#125a78 #c8a6aa,#88606a #c8a898,#785040 #b0d6ee,#70aac8 #a6c8ec,#5890d4 #d0dccc,#a8c098 #a8d49c,#30a050 #dcaea0,#c03c30"
  ]
};
for (const box of document.querySelectorAll("[data-set]")) {
  for (const color of sets[box.dataset.set].join(" ").split(" ")) {
    const b = document.createElement("button");
    const blend = color.includes(",");
    b.className = blend ? "gradient" : "swatch";
    b.style.background = blend ? `linear-gradient(${color})` : color;
    b.setAttribute("aria-label", color);
    if (color === "#ffe699") b.classList.add("chosen");
    box.append(b);
  }
}
/* One span per word, so that a justified line can share its free space between the words. */
for (const line of document.querySelectorAll(".line")) {
  const words = line.textContent.split(" ");
  line.textContent = "";
  for (const word of words) {
    const w = document.createElement("span");
    w.textContent = word;
    if (word === "Qin" || word === "Lanting") w.className = "typo";
    line.append(w, " ");
  }
}
```
